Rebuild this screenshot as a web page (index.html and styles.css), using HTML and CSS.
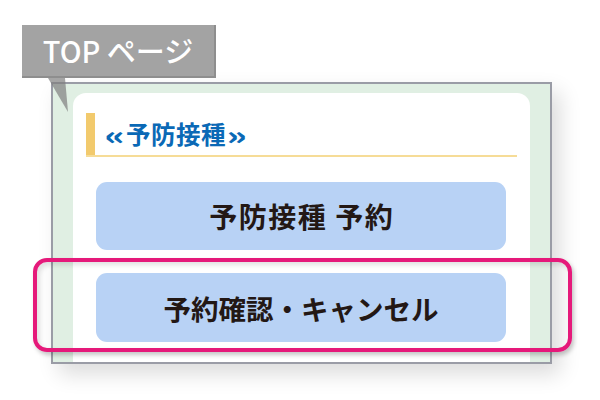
FILE: index.html
```html
<!DOCTYPE html>
<html lang="ja">
<head>
<meta charset="utf-8">
<link rel="stylesheet" href="styles.css">
</head>
<body>
<div class="stage">
  <div class="frame">
    <div class="card">
      <div class="heading">
        <div class="heading-bar"><span class="quote quote-l">«</span>予防接種<span class="quote quote-r">»</span></div>
      </div>
      <div class="buttons">
        <div class="btn btn-first">予防接種 予約</div>
        <div class="btn btn-second">予約確認・キャンセル</div>
      </div>
    </div>
  </div>
  <div class="tab">TOP ページ</div>
  <svg class="tail" width="30" height="40" viewBox="0 0 30 40">
    <polygon points="0,0 17,0 20,34" fill="#7f7f7f" fill-opacity="0.7"/>
  </svg>
  <div class="highlight"></div>
</div>
</body>
</html>
```

FILE: styles.css
```css
* { box-sizing: border-box; }
html, body { margin: 0; padding: 0; background: #ffffff; }
body {
  font-family: "Noto Sans CJK JP", "Noto Sans", sans-serif;
}
.stage {
  position: relative;
  width: 600px;
  height: 400px;
  overflow: hidden;
  padding: 82px 0 0 51px;
}
.frame {
  width: 501px;
  height: 282px;
  border: 2px solid #9a9ca6;
  background: #e0efe3;
  padding: 9px 20px 0 20px;
  box-shadow: 8px 10px 20px rgba(0, 0, 0, 0.14);
  overflow: hidden;
}
.card {
  background: #ffffff;
  border-radius: 13px 13px 0 0;
  height: 100%;
  padding: 20px 13px 0 13px;
}
.heading {
  border-bottom: 2px solid #f6dc97;
}
.heading-bar {
  border-left: 9px solid #f2ca6d;
  height: 42px;
  padding-left: 10px;
  color: #0a69b6;
  font-weight: 700;
  font-size: 24.5px;
  line-height: 42px;
  letter-spacing: 0.5px;
  display: flex;
  align-items: center;
}
.quote {
  display: inline-block;
  font-size: 25px;
  font-weight: 900;
  width: 20px;
  text-align: center;
  transform: scaleX(1.45);
}
.quote-l { margin-right: 1px; }
.quote-r { margin-left: 1px; }
.buttons {
  display: flex;
  flex-direction: column;
  gap: 23px;
  padding: 25px 11px 0 10px;
}
.btn {
  height: 68px;
  border-radius: 11px;
  background: #b8d2f5;
  color: #231815;
  font-weight: 700;
  display: flex;
  align-items: center;
  justify-content: center;
}
.btn-first {
  font-size: 28px;
  letter-spacing: 1.5px;
  padding-left: 1.5px;
}
.btn-second {
  height: 69px;
  font-size: 27.5px;
}
.tab {
  position: absolute;
  left: 22px;
  top: 25px;
  width: 194px;
  height: 53px;
  background: #a3a3a3;
  border-right: 2px solid #8e8e8e;
  border-bottom: 2px solid #8e8e8e;
  color: #ffffff;
  font-size: 29px;
  font-weight: 500;
  display: flex;
  align-items: center;
  justify-content: center;
  padding-bottom: 2px;
}
.tail {
  position: absolute;
  left: 48px;
  top: 78px;
}
.highlight {
  position: absolute;
  left: 33px;
  top: 258px;
  width: 539px;
  height: 94px;
  border: 4px solid #e5197a;
  border-radius: 14px;
  box-shadow: 2px 3px 4px rgba(0, 0, 0, 0.22), inset 3px 3px 5px rgba(0, 0, 0, 0.12);
}
```
